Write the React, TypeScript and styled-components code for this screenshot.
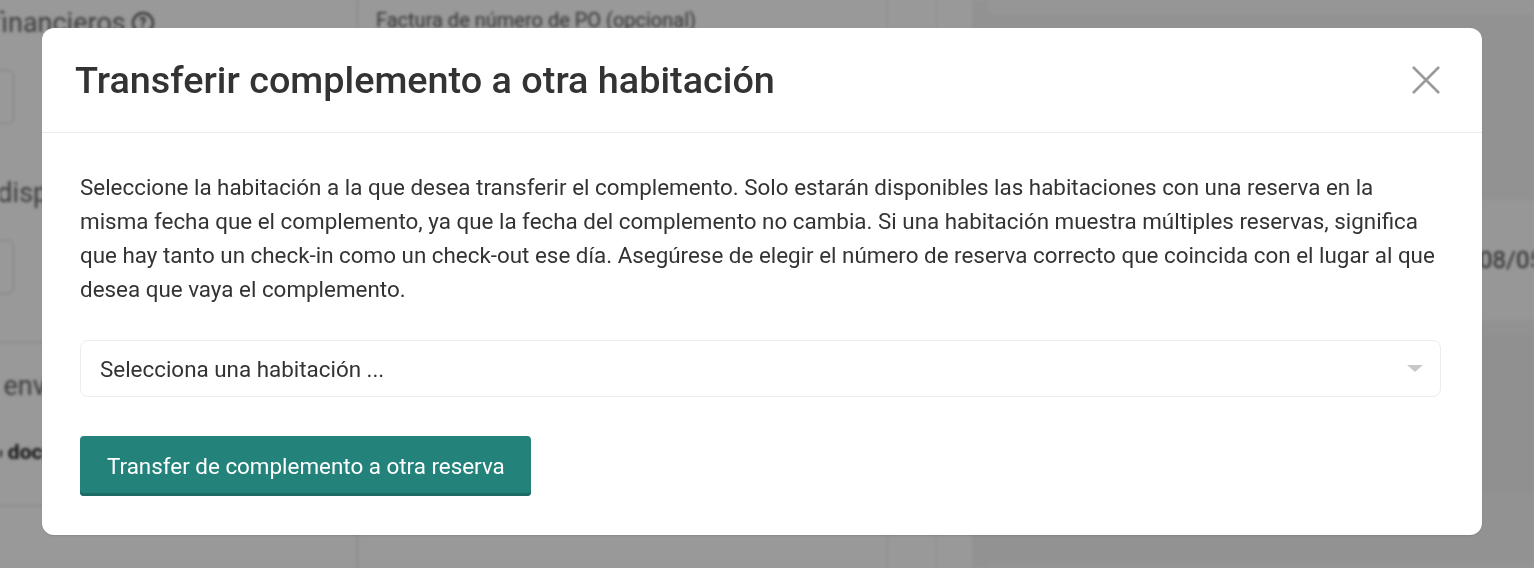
import React from "react";
import styled, { createGlobalStyle } from "styled-components";

const Global = createGlobalStyle`
  html, body { margin: 0; padding: 0; }
  body {
    font-family: Roboto, "Noto Sans", "Liberation Sans", sans-serif;
    background: #ffffff;
    width: 1534px;
    height: 568px;
    overflow: hidden;
  }
`;

/* ---------- background page (blurred, under overlay) ---------- */
const Page = styled.div`
  display: flex;
  width: 1534px;
  height: 568px;
  filter: blur(1.4px);
  color: #333;
`;

const LeftCol = styled.div`
  width: 357px;
  flex-shrink: 0;
  display: flex;
  flex-direction: column;
  border-right: 1px solid #dcdcdc;
  overflow: hidden;
`;

const FieldLabel = styled.div<{ $top: number; $shift: number; $bold?: boolean }>`
  margin-top: ${(p) => p.$top}px;
  margin-left: ${(p) => p.$shift}px;
  height: 30px;
  line-height: 30px;
  display: flex;
  align-items: center;
  gap: 6px;
  font-size: ${(p) => (p.$bold ? 21 : 27)}px;
  font-weight: ${(p) => (p.$bold ? 700 : 400)};
  color: ${(p) => (p.$bold ? "#222" : "#666")};
  white-space: nowrap;
`;

const HelpDot = styled.span`
  width: 18px;
  height: 18px;
  border: 2px solid #444;
  border-radius: 50%;
  font-size: 14px;
  font-weight: 700;
  line-height: 18px;
  text-align: center;
  color: #444;
`;

const FieldBox = styled.div<{ $top: number }>`
  margin-top: ${(p) => p.$top}px;
  margin-left: -40px;
  height: 52px;
  width: 52px;
  border: 1px solid #d4d4d4;
  border-radius: 6px;
`;

const Rule = styled.div<{ $top: number }>`
  margin-top: ${(p) => p.$top}px;
  height: 1px;
  background: #dcdcdc;
`;

const MidCol = styled.div`
  width: 530px;
  flex-shrink: 0;
  padding: 8px 0 0 18px;
  box-sizing: border-box;
  border-right: 1px solid #e8e8e8;
`;

const MidLabel = styled.div`
  font-size: 20px;
  color: #555;
  white-space: nowrap;
`;

const MidAside = styled.div`
  width: 48px;
  flex-shrink: 0;
  border-right: 1px solid #ececec;
`;

const RightCol = styled.div`
  flex: 1;
  margin-left: 35px;
  background: #f4f4f4;
  display: flex;
  flex-direction: column;
  padding-left: 15px;
  overflow: hidden;
`;

const RightCard = styled.div<{ $h: number; $top: number; $bg: string }>`
  margin-top: ${(p) => p.$top}px;
  height: ${(p) => p.$h}px;
  flex-shrink: 0;
  background: ${(p) => p.$bg};
  border-radius: 6px;
  display: flex;
  align-items: center;
  padding-left: 492px;
  font-size: 24px;
  color: #444;
  white-space: nowrap;
  margin-right: -20px;
`;

/* ---------- overlay + modal ---------- */
const Overlay = styled.div`
  position: fixed;
  inset: 0;
  background: rgba(0, 0, 0, 0.4);
  display: flex;
  align-items: flex-start;
  padding: 28px 0 0 42px;
  box-sizing: border-box;
`;

const Modal = styled.div`
  width: 1440px;
  background: #fff;
  border-radius: 12px;
  display: flex;
  flex-direction: column;
  box-shadow: 0 1px 2px rgba(0, 0, 0, 0.12);
`;

const Header = styled.div`
  height: 105px;
  box-sizing: border-box;
  padding: 0 41px 0 33px;
  display: flex;
  align-items: center;
  justify-content: space-between;
  border-bottom: 1px solid #ebebeb;
`;

const Title = styled.h2`
  margin: 0;
  font-size: 37.8px;
  font-weight: 500;
  color: #333;
`;

const CloseButton = styled.button`
  width: 30px;
  height: 30px;
  padding: 0;
  border: none;
  background: none;
  cursor: pointer;
  display: flex;
  align-items: center;
  justify-content: center;
`;

const Body = styled.div`
  padding: 37px 41px 39px 38px;
  display: flex;
  flex-direction: column;
`;

const Description = styled.p`
  margin: 0;
  font-size: 22.4px;
  line-height: 34px;
  color: #333;
`;

const SelectBox = styled.div`
  margin-top: 34px;
  height: 57px;
  box-sizing: border-box;
  border: 1px solid #ececec;
  border-radius: 8px;
  padding: 0 17px 0 19px;
  display: flex;
  align-items: center;
  justify-content: space-between;
  font-size: 22.4px;
  color: #333;
`;

const Caret = styled.span`
  width: 0;
  height: 0;
  border-left: 8px solid transparent;
  border-right: 8px solid transparent;
  border-top: 7px solid #c8c8c8;
`;

const PrimaryButton = styled.button`
  align-self: flex-start;
  margin-top: 39px;
  height: 60px;
  padding: 0 26px 0 27px;
  border: none;
  border-radius: 4px;
  background: #23837a;
  box-shadow: inset 0 -3px 0 #1c6b64;
  color: #fff;
  font-family: Roboto, "Noto Sans", sans-serif;
  font-size: 22.4px;
  cursor: pointer;
`;

export default function App() {
  return (
    <>
      <Global />
      <Page>
        <LeftCol>
          <FieldLabel $top={8} $shift={-84}>
            Datos financieros <HelpDot>?</HelpDot>
          </FieldLabel>
          <FieldBox $top={32} />
          <FieldLabel $top={54} $shift={-44}>No disponible</FieldLabel>
          <FieldBox $top={32} />
          <Rule $top={48} />
          <FieldLabel $top={28} $shift={-70}>Email enviado</FieldLabel>
          <FieldLabel $top={36} $shift={-62} $bold>Estado documento</FieldLabel>
          <Rule $top={38} />
        </LeftCol>
        <MidCol>
          <MidLabel>Factura de número de PO (opcional)</MidLabel>
        </MidCol>
        <MidAside />
        <RightCol>
          <RightCard $top={0} $h={14} $bg="#fafafa" />
          <RightCard $top={186} $h={120} $bg="#fcfcfc">08/05/2024</RightCard>
          <RightCard $top={14} $h={160} $bg="#f1f1f1" />
          <RightCard $top={68} $h={40} $bg="#f8f8f8" />
        </RightCol>
      </Page>
      <Overlay>
        <Modal role="dialog" aria-modal="true">
          <Header>
            <Title>Transferir complemento a otra habitación</Title>
            <CloseButton aria-label="Cerrar">
              <svg width="30" height="30" viewBox="0 0 30 30">
                <path d="M2 2 L28 28 M28 2 L2 28" stroke="#9a9a9a" strokeWidth="2.6" fill="none" />
              </svg>
            </CloseButton>
          </Header>
          <Body>
            <Description>
              Seleccione la habitación a la que desea transferir el complemento. Solo estarán disponibles las habitaciones con una reserva en la misma fecha que el complemento, ya que la fecha del complemento no cambia. Si una habitación muestra múltiples reservas, significa que hay tanto un check-in como un check-out ese día. Asegúrese de elegir el número de reserva correcto que coincida con el lugar al que desea que vaya el complemento.
            </Description>
            <SelectBox>
              <span>Selecciona una habitación ...</span>
              <Caret />
            </SelectBox>
            <PrimaryButton>Transfer de complemento a otra reserva</PrimaryButton>
          </Body>
        </Modal>
      </Overlay>
    </>
  );
}
